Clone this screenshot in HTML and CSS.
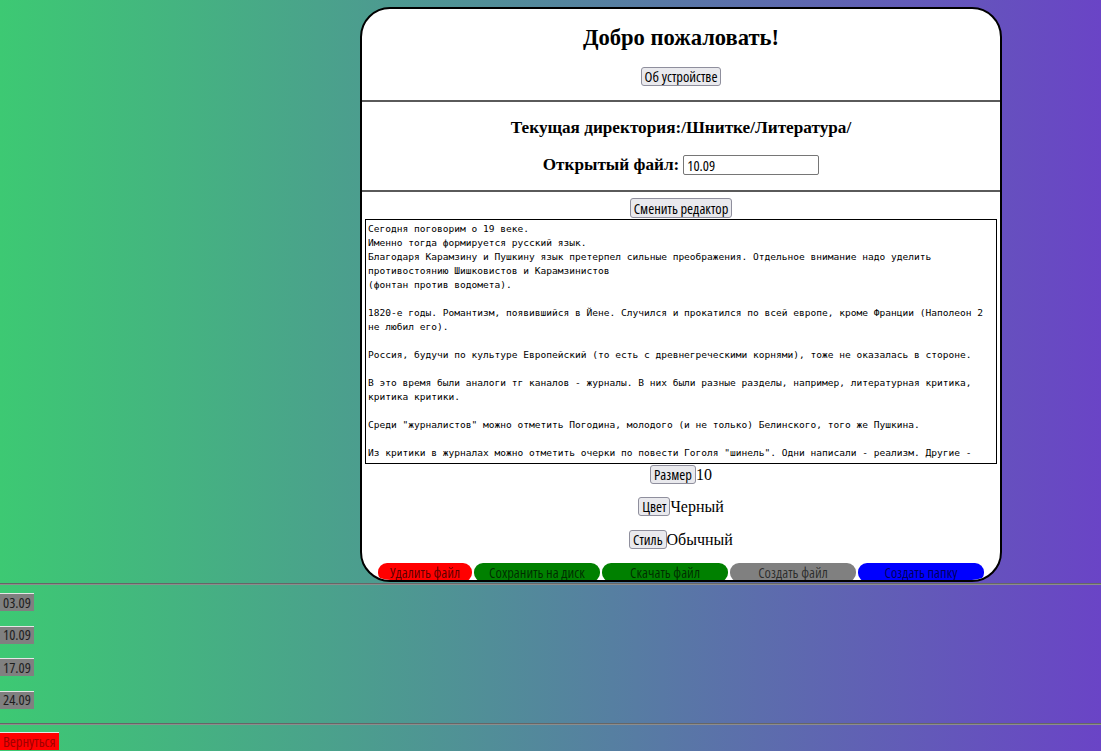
FILE: index.html
```html
<!DOCTYPE html>
<html lang="ru">
<head>
<meta charset="utf-8">
<title>Редактор</title>
<link rel="stylesheet" href="styles.css">
</head>
<body>
<div class="page">
  <div class="card">
    <section class="head">
      <h2 class="title">Добро пожаловать!</h2>
      <button class="btn btn-about">Об устройстве</button>
    </section>
    <hr class="card-rule">
    <section class="info">
      <h3 class="dir">Текущая директория:/Шнитке/Литература/</h3>
      <div class="file-row">
        <h3 class="file-label">Открытый файл:</h3>
        <input class="file-input" type="text" value="10.09">
      </div>
    </section>
    <hr class="card-rule">
    <section class="editor">
      <button class="btn btn-switch">Сменить редактор</button>
      <textarea class="text" spellcheck="false">Сегодня поговорим о 19 веке.
Именно тогда формируется русский язык.
Благодаря Карамзину и Пушкину язык претерпел сильные преображения. Отдельное внимание надо уделить противостоянию Шишковистов и Карамзинистов
(фонтан против водомета).

1820-е годы. Романтизм, появившийся в Йене. Случился и прокатился по всей европе, кроме Франции (Наполеон 2 не любил его).

Россия, будучи по культуре Европейский (то есть с древнегреческими корнями), тоже не оказалась в стороне.

В это время были аналоги тг каналов - журналы. В них были разные разделы, например, литературная критика, критика критики.

Среди "журналистов" можно отметить Погодина, молодого (и не только) Белинского, того же Пушкина.

Из критики в журналах можно отметить очерки по повести Гоголя "шинель". Одни написали - реализм. Другие - романтизм.</textarea>
      <div class="opt opt-size"><button class="btn">Размер</button><span class="opt-value">10</span></div>
      <div class="opt opt-color"><button class="btn">Цвет</button><span class="opt-value">Черный</span></div>
      <div class="opt opt-style"><button class="btn">Стиль</button><span class="opt-value">Обычный</span></div>
      <div class="actions">
        <button class="act act-del">Удалить файл</button>
        <button class="act act-save">Сохранить на диск</button>
        <button class="act act-dl">Скачать файл</button>
        <button class="act act-new">Создать файл</button>
        <button class="act act-dir">Создать папку</button>
      </div>
    </section>
  </div>
  <hr class="page-rule">
  <div class="files">
    <button class="file-btn">03.09</button>
    <button class="file-btn">10.09</button>
    <button class="file-btn">17.09</button>
    <button class="file-btn">24.09</button>
  </div>
  <hr class="page-rule page-rule-2">
  <button class="back-btn">Вернуться</button>
</div>
</body>
</html>
```
FILE: styles.css
```css
html {
  background: linear-gradient(to right, #3dc973, #6a44c6);
  min-height: 100%;
}

body {
  margin: 0;
  min-height: 751px;
  font-family: "Liberation Serif", serif;
}

.page {
  padding-top: 7px;
}

.card {
  margin-left: 360px;
  width: 642px;
  height: 575px;
  box-sizing: border-box;
  border: 2px solid #000;
  border-radius: 30px;
  background: #fff;
  overflow: hidden;
  display: flex;
  flex-direction: column;
}

.head,
.info,
.editor {
  display: flex;
  flex-direction: column;
  align-items: center;
}

.head {
  padding-top: 16px;
}

.title {
  margin: 0;
  font: bold 22.6px/26px "Liberation Serif", serif;
}

.btn,
.file-input,
.act,
.file-btn,
.back-btn {
  font-family: "Open Sans", "Noto Sans", sans-serif;
  font-stretch: 75%;
  font-size: 14.5px;
}

.btn {
  height: 19px;
  padding: 0 3px;
  border: 1px solid #8f8f9d;
  border-radius: 3px;
  background: #e9e9ed;
  color: #000;
  box-sizing: border-box;
  line-height: 17px;
}

.btn-about {
  margin-top: 16px;
}

.card-rule {
  margin: 14px 0 0;
  height: 0;
  border: 0;
  border-top: 2px solid #5a5a5a;
}

.info {
  padding-top: 15px;
}

.dir,
.file-label {
  margin: 0;
  font: bold 17.2px/22px "Liberation Serif", serif;
}

.file-row {
  margin-top: 15px;
  display: flex;
  align-items: center;
  gap: 4px;
}

.file-input {
  width: 136px;
  height: 20px;
  box-sizing: border-box;
  border: 1px solid #767676;
  border-radius: 2px;
  padding: 0 3px;
  color: #000;
}

.editor {
  padding-top: 6px;
}

.btn-switch {
  height: 20px;
}

.text {
  margin-top: 1px;
  width: 632px;
  height: 245px;
  box-sizing: border-box;
  border: 1px solid #000;
  padding: 2px;
  font: 9.55px/14px "DejaVu Sans Mono", monospace;
  color: #000;
  resize: none;
  overflow: hidden;
}

.opt {
  display: flex;
  align-items: center;
}

.opt-size {
  margin-top: 1px;
}

.opt-color {
  margin-top: 13px;
}

.opt-style {
  margin-top: 14px;
}

.opt-value {
  font: 16px/19px "Liberation Serif", serif;
}

.actions {
  margin-top: 14px;
  display: flex;
  justify-content: center;
  gap: 2px;
}

.act {
  width: 126px;
  height: 19px;
  border: 0;
  border-radius: 9px;
  padding: 0;
  color: rgba(0, 0, 0, 0.66);
  line-height: 19px;
}

.act-del {
  width: 94px;
  background: #ff0000;
}

.act-save,
.act-dl {
  background: #008000;
}

.act-new {
  background: #808080;
}

.act-dir {
  background: #0000ff;
}

.page-rule {
  margin: 1px 0 0;
  height: 0;
  border: 0;
  border-top: 1px solid #666;
  border-bottom: 1px solid #8c8c8c;
}

.page-rule-2 {
  margin-top: 14.5px;
}

.files {
  padding-top: 8px;
  display: flex;
  flex-direction: column;
  align-items: flex-start;
  gap: 14.5px;
}

.file-btn,
.back-btn {
  height: 18px;
  padding: 0 3px;
  border: 0;
  border-top: 1px solid #e6e6e6;
  border-radius: 0;
  box-sizing: border-box;
  line-height: 16px;
}

.file-btn {
  background: #808080;
  color: #1e1e1e;
}

.back-btn {
  margin-top: 7px;
  background: #ff0000;
  color: #a00000;
}
```
